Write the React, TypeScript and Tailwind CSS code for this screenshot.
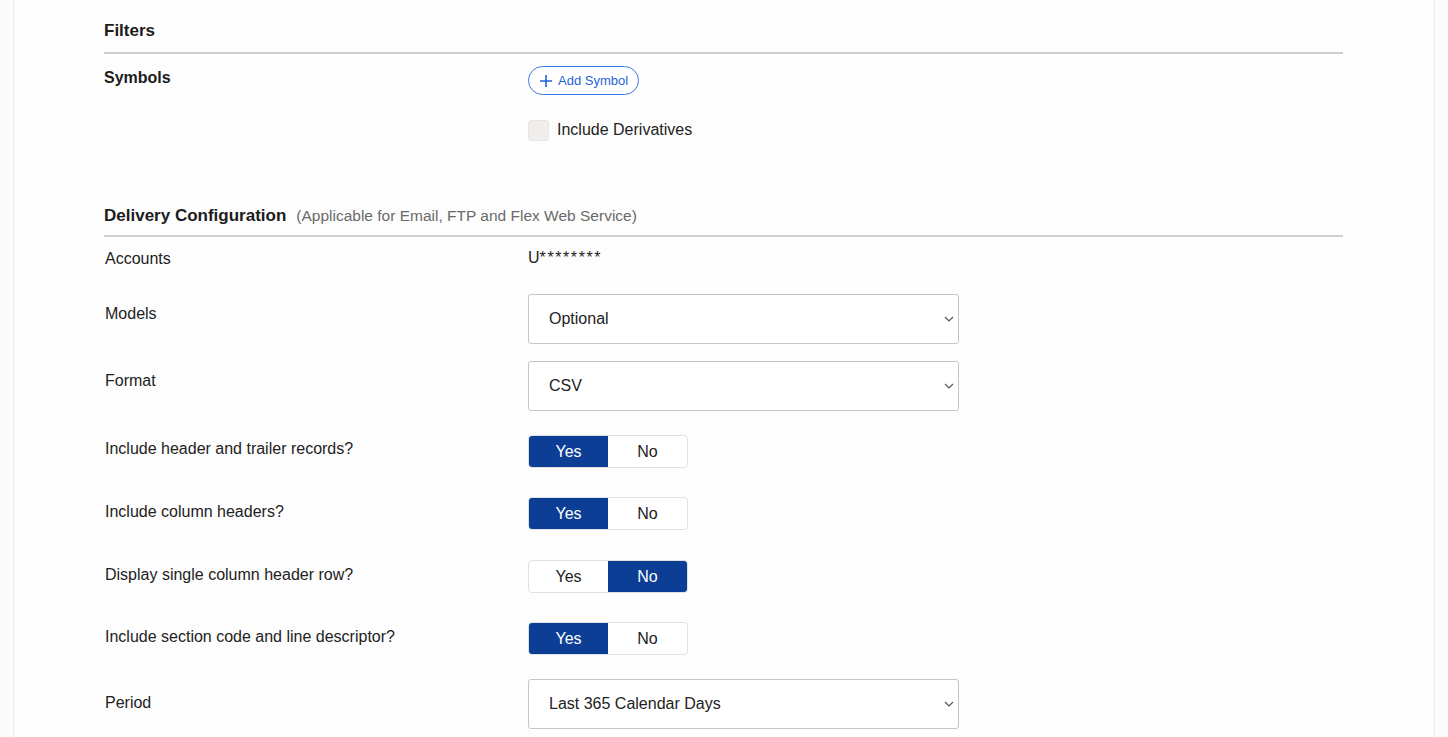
// Report delivery settings form
import type { FC, ReactNode } from "react"

const font = { fontFamily: '"Liberation Sans", Arial, sans-serif' }

const Chevron = () => (
    <svg width="10" height="6" viewBox="0 0 10 6" fill="none" stroke="#555" strokeWidth="1.2">
        <path d="M1 1l4 4 4-4" />
    </svg>
)

interface SelectProps {
    value: string
}

const SelectBox: FC<SelectProps> = ({ value }) => (
    <div className="flex items-center justify-between w-[431px] h-[50px] border border-[#c6c6c6] rounded-[3px] bg-white pl-[20px] pr-[4px] text-[16px] text-[#222]">
        <span>{value}</span>
        <Chevron />
    </div>
)

interface ToggleProps {
    yes: boolean
}

const YesNo: FC<ToggleProps> = ({ yes }) => (
    <div className="flex w-[160px] h-[33px] border border-[#e1e1e1] rounded-[4px] overflow-hidden bg-white text-[16px]">
        <div className={`flex-1 flex items-center justify-center ${yes ? "bg-[#0b3e94] text-white" : "text-[#222]"}`}>Yes</div>
        <div className={`flex-1 flex items-center justify-center ${!yes ? "bg-[#0b3e94] text-white" : "text-[#222]"}`}>No</div>
    </div>
)

interface RowProps {
    label: string
    labelClass?: string
    rowClass: string
    children: ReactNode
}

const Row: FC<RowProps> = ({ label, labelClass = "", rowClass, children }) => (
    <div className={`grid grid-cols-[424px_1fr] items-start ${rowClass}`}>
        <div className={`text-[16px] leading-[22px] text-[#222] pl-[1px] ${labelClass}`}>{label}</div>
        <div>{children}</div>
    </div>
)

const App: FC = () => {
    return (
        <div className="min-h-screen bg-[#fbfbfb] px-[13px]" style={font}>
            <div className="min-h-[737px] bg-[#fdfdfd] border-x border-[#ececec] pl-[90px] pr-[91px]">
                {/* Filters */}
                <div className="pt-[19px] pb-[9px] border-b-2 border-[#cfcfcf]">
                    <h2 className="text-[17px] leading-[24px] font-bold text-[#1c1c1c]">Filters</h2>
                </div>
                <div className="grid grid-cols-[424px_1fr] items-start mt-[12px]">
                    <div className="text-[16px] leading-[22px] font-bold text-[#1c1c1c] pt-[1px]">Symbols</div>
                    <div className="flex flex-col items-start">
                        <button className="flex items-center gap-[5px] h-[29px] px-[10px] rounded-full border border-[#3a78e0] text-[13px] text-[#1f63d6] bg-white">
                            <svg width="14" height="14" viewBox="0 0 14 14" stroke="#1f63d6" strokeWidth="1.6">
                                <path d="M7 1v12M1 7h12" />
                            </svg>
                            Add Symbol
                        </button>
                        <label className="flex items-center gap-[8px] mt-[23px] text-[16px] text-[#222]">
                            <span className="w-[21px] h-[21px] rounded-[3px] bg-[#efeeec] border border-[#e6e5e3]" />
                            Include Derivatives
                        </label>
                    </div>
                </div>

                {/* Delivery configuration */}
                <div className="mt-[62px] pb-[7px] border-b-2 border-[#cfcfcf] flex items-baseline gap-[10px]">
                    <h2 className="text-[17px] leading-[24px] font-bold text-[#1c1c1c]">Delivery Configuration</h2>
                    <span className="text-[15.5px] text-[#6a6a6a]">(Applicable for Email, FTP and Flex Web Service)</span>
                </div>

                <Row label="Accounts" labelClass="pt-[1px]" rowClass="mt-[10px]">
                    <div className="text-[16px] leading-[22px] text-[#222]">
                        U<span className="tracking-[1.6px]">********</span>
                    </div>
                </Row>
                <Row label="Models" labelClass="pt-[9px]" rowClass="mt-[24px]">
                    <SelectBox value="Optional" />
                </Row>
                <Row label="Format" labelClass="pt-[9px]" rowClass="mt-[17px]">
                    <SelectBox value="CSV" />
                </Row>
                <Row label="Include header and trailer records?" labelClass="pt-[3px]" rowClass="mt-[24px]">
                    <YesNo yes={true} />
                </Row>
                <Row label="Include column headers?" labelClass="pt-[4px]" rowClass="mt-[29px]">
                    <YesNo yes={true} />
                </Row>
                <Row label="Display single column header row?" labelClass="pt-[4px]" rowClass="mt-[30px]">
                    <YesNo yes={false} />
                </Row>
                <Row label="Include section code and line descriptor?" labelClass="pt-[4px]" rowClass="mt-[29px]">
                    <YesNo yes={true} />
                </Row>
                <Row label="Period" labelClass="pt-[13px]" rowClass="mt-[24px]">
                    <SelectBox value="Last 365 Calendar Days" />
                </Row>
            </div>
        </div>
    )
}

export default App
